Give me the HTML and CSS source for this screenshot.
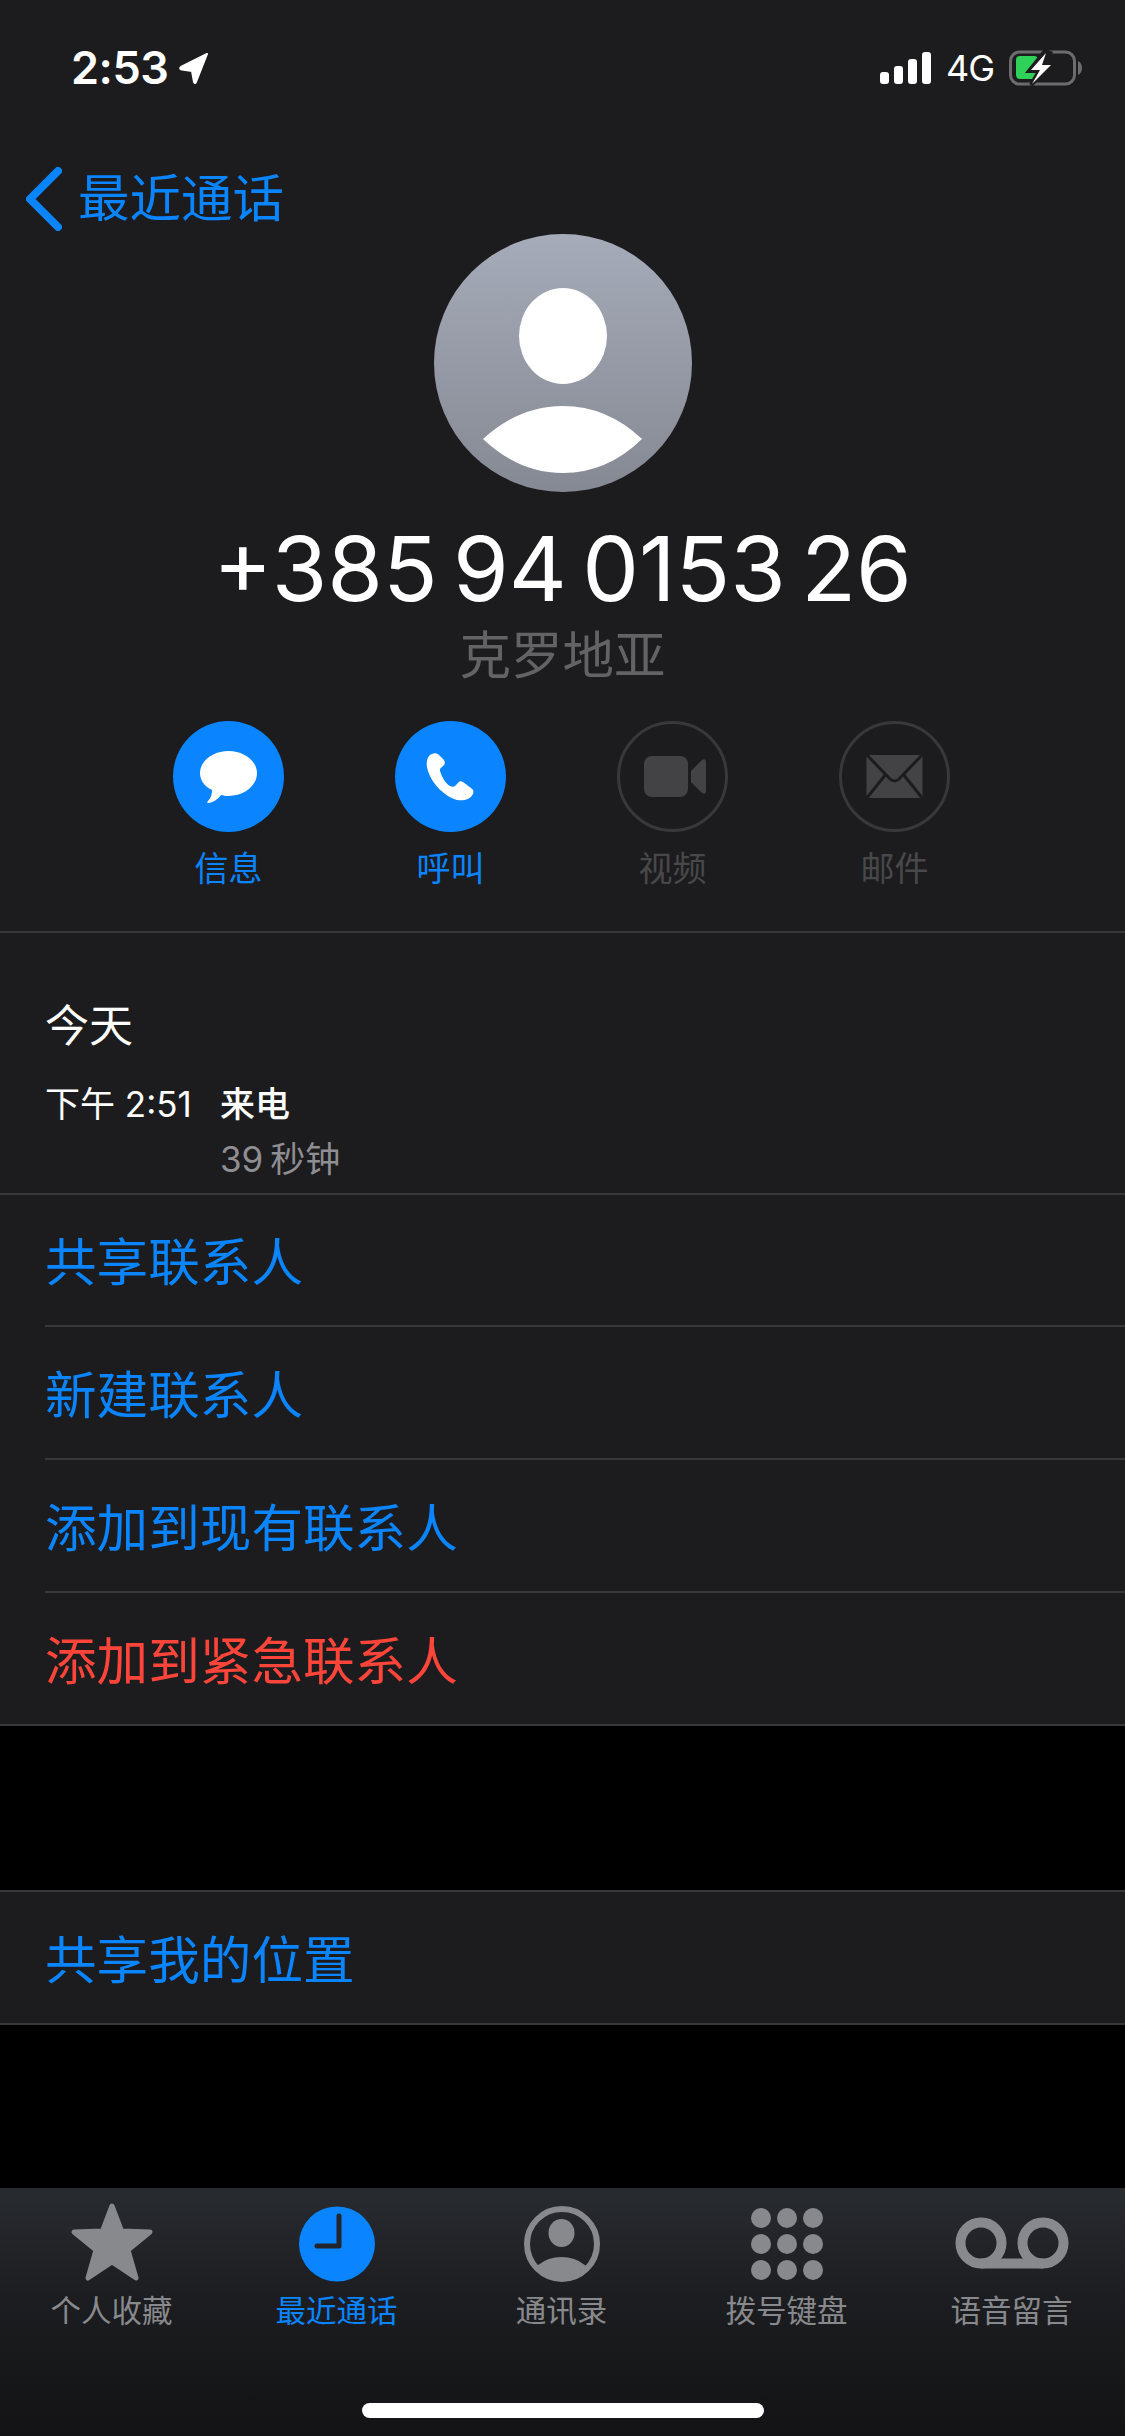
FILE: index.html
```html
<!DOCTYPE html>
<html lang="zh-CN">
<head>
    <meta charset="UTF-8">
    <title>最近通话</title>
    <link rel="stylesheet" href="styles.css">
</head>
<body>
    <div class="phone">
        <div class="status-bar">
            <div class="status-left">
                <span class="status-time">2:53</span>
                <svg class="status-arrow" width="30" height="32" viewBox="0 0 30 32"><path d="M28 2 L2 15 Q0 17 3 17.500 L13 19 L15 30 Q16 32 17 30 Z" fill="#fff" stroke="#fff" stroke-width="2" stroke-linejoin="round"/></svg>
            </div>
            <div class="status-right">
                <div class="signal">
                    <span class="signal-bar bar-1"></span>
                    <span class="signal-bar bar-2"></span>
                    <span class="signal-bar bar-3"></span>
                    <span class="signal-bar bar-4"></span>
                </div>
                <span class="status-net">4G</span>
                <svg class="battery" width="73" height="36" viewBox="0 0 73 36">
                    <rect x="1.500" y="2" width="64" height="32" rx="9" fill="none" stroke="#6c6c6e" stroke-width="3"/>
                    <path d="M69 11 Q73 13 73 18 Q73 23 69 25 Z" fill="#6c6c6e"/>
                    <rect x="7" y="6" width="22" height="23" rx="4" fill="#30d158"/>
                    <path d="M36 1 L20 21 L30 21 L22 35 L43 14 L33 14 L41 3 Z" fill="#1c1c1e" stroke="#1c1c1e" stroke-width="4"/>
                    <path d="M37 3 L22 20 L31 20 L23 34 L42 15 L33 15 Z" fill="#fff"/>
                </svg>
            </div>
        </div>

        <div class="nav-bar">
            <svg width="36" height="64" viewBox="0 0 36 64"><path d="M32 4 L4 32 L32 60" fill="none" stroke="#0a84ff" stroke-width="8" stroke-linecap="round" stroke-linejoin="round"/></svg>
            <span class="nav-back">最近通话</span>
        </div>

        <div class="contact-head">
            <svg class="avatar" width="258" height="258" viewBox="0 0 258 258">
                <defs>
                    <linearGradient id="avatar-bg" x1="0" y1="0" x2="0" y2="1">
                        <stop offset="0" stop-color="#a6abb9"/>
                        <stop offset="1" stop-color="#858993"/>
                    </linearGradient>
                </defs>
                <circle cx="129" cy="129" r="129" fill="url(#avatar-bg)"/>
                <ellipse cx="129" cy="102" rx="44" ry="48" fill="#fff"/>
                <path d="M49 205 Q85 172 129 172 Q173 172 208 205 Q173 239 129 239 Q85 239 49 205 Z" fill="#fff"/>
            </svg>
            <div class="contact-number">+385 94 0153 26</div>
            <div class="contact-region">克罗地亚</div>

            <div class="actions">
                <div class="action">
                    <div class="action-circle active">
                        <svg width="111" height="111" viewBox="0 0 111 111"><path d="M55.500 30 C71 30 84 40 84 52 C84 65 71 75 55.500 75 C53 75 50 74.500 48 74 C45 78 40 82 35 82 C34 82 34 81 35 80 C38 77 39 73 39 69 C31 65 27 59 27 52 C27 40 40 30 55.500 30 Z" fill="#fff"/></svg>
                    </div>
                    <span class="action-label">信息</span>
                </div>
                <div class="action">
                    <div class="action-circle active">
                        <svg width="111" height="111" viewBox="0 0 111 111"><path d="M37 33 C33 34 31 40 32 46 C34 58 46 74 62 79 C68 80 75 79 78 73 C79 70 78 68 76 67 L68 61 C66 60 64 60 63 62 L60 65 C59 66 57 66 55 65 C50 62 47 56 45 50 C45 48 45 47 47 46 L49 44 C50 43 50 41 49 39 L44 34 C42 32 39 32 37 33 Z" fill="#fff"/></svg>
                    </div>
                    <span class="action-label">呼叫</span>
                </div>
                <div class="action disabled">
                    <div class="action-circle">
                        <svg width="105" height="105" viewBox="3 3 105 105"><rect x="27" y="35" width="44" height="41" rx="8" fill="#434346"/><path d="M74 50 L85 39 Q89 37 89 41 L89 70 Q89 74 85 72 L74 61 Z" fill="#434346"/></svg>
                    </div>
                    <span class="action-label">视频</span>
                </div>
                <div class="action disabled">
                    <div class="action-circle">
                        <svg width="105" height="105" viewBox="3 3 105 105"><rect x="27.500" y="34" width="56" height="43" rx="3" fill="#434346"/><path d="M27 33 L51 58 Q55.500 62 60 58 L84 33 M27 78 L47 53 M84 78 L64 53" fill="none" stroke="#1c1c1e" stroke-width="3"/></svg>
                    </div>
                    <span class="action-label">邮件</span>
                </div>
            </div>
        </div>

        <div class="call-section">
            <div class="call-date">今天</div>
            <div class="call-row">
                <span class="call-time">下午 2:51</span>
                <div class="call-info">
                    <div class="call-type">来电</div>
                    <div class="call-duration">39 秒钟</div>
                </div>
            </div>
        </div>

        <div class="action-list">
            <div class="list-row"><span class="list-text">共享联系人</span></div>
            <div class="list-row"><span class="list-text">新建联系人</span></div>
            <div class="list-row"><span class="list-text">添加到现有联系人</span></div>
            <div class="list-row"><span class="list-text danger">添加到紧急联系人</span></div>
        </div>

        <div class="action-list second">
            <div class="list-row"><span class="list-text">共享我的位置</span></div>
        </div>

        <div class="tab-bar">
            <div class="tabs">
                <div class="tab">
                    <svg class="tab-icon" width="86" height="80" viewBox="0 0 86 80"><path d="M43 4 L52.500 29 L81 30 L59 48 L67 76 L43 60 L19 76 L27 48 L5 30 L33.500 29 Z" fill="#88898d" stroke="#88898d" stroke-width="5" stroke-linejoin="round"/></svg>
                    <span class="tab-label">个人收藏</span>
                </div>
                <div class="tab current">
                    <svg class="tab-icon" width="76" height="80" viewBox="0 0 76 80"><ellipse cx="38" cy="42" rx="38" ry="37.500" fill="#0a84ff"/><path d="M40 14 L40 44 L18 44" fill="none" stroke="#22262c" stroke-width="5" stroke-linecap="round" stroke-linejoin="round"/></svg>
                    <span class="tab-label">最近通话</span>
                </div>
                <div class="tab">
                    <svg class="tab-icon" width="76" height="80" viewBox="0 0 76 80">
                        <defs><clipPath id="contact-clip"><circle cx="38" cy="42" r="36"/></clipPath></defs>
                        <circle cx="38" cy="42" r="35" fill="none" stroke="#88898d" stroke-width="6"/>
                        <ellipse cx="37.500" cy="31" rx="13" ry="14" fill="#88898d"/>
                        <ellipse cx="37.500" cy="82" rx="33" ry="27" fill="#88898d" clip-path="url(#contact-clip)"/>
                    </svg>
                    <span class="tab-label">通讯录</span>
                </div>
                <div class="tab">
                    <div class="tab-icon keypad">
                        <span class="key-dot"></span><span class="key-dot"></span><span class="key-dot"></span>
                        <span class="key-dot"></span><span class="key-dot"></span><span class="key-dot"></span>
                        <span class="key-dot"></span><span class="key-dot"></span><span class="key-dot"></span>
                    </div>
                    <span class="tab-label">拨号键盘</span>
                </div>
                <div class="tab">
                    <svg class="tab-icon" width="114" height="80" viewBox="0 0 114 80"><circle cx="26" cy="41" r="20.500" fill="none" stroke="#88898d" stroke-width="10"/><circle cx="88" cy="41" r="20.500" fill="none" stroke="#88898d" stroke-width="10"/><path d="M26 61.500 L88 61.500" stroke="#88898d" stroke-width="10"/></svg>
                    <span class="tab-label">语音留言</span>
                </div>
            </div>
            <div class="home-indicator"></div>
        </div>
    </div>
</body>
</html>
```

FILE: styles.css
```css
:root {
    --bg-color: #1c1c1e;
    --blue: #0a84ff;
    --red: #ff453a;
    --line: #38383a;
    --tab-gray: #88898d;
}

* {
    box-sizing: border-box;
}

body {
    margin: 0;
    background-color: #000;
    font-family: Inter, 'Noto Sans CJK SC', sans-serif;
}

.phone {
    width: 1125px;
    height: 2436px;
    display: flex;
    flex-direction: column;
    background-color: #000;
    overflow: hidden;
}

/* status bar */
.status-bar {
    height: 167px;
    padding: 50px 43px 0 71px;
    display: flex;
    justify-content: space-between;
    align-items: flex-start;
    background-color: var(--bg-color);
    color: #fff;
}

.status-left {
    display: flex;
    align-items: center;
    gap: 11px;
}

.status-time {
    font-size: 45px;
    font-weight: 600;
    letter-spacing: -0.5px;
    line-height: 36px;
}

.status-right {
    display: flex;
    align-items: center;
    gap: 15px;
}

.signal {
    display: flex;
    align-items: flex-end;
    gap: 5px;
    height: 32px;
}

.signal-bar {
    width: 9px;
    background-color: #fff;
    border-radius: 3px;
}

.bar-1 { height: 12px; }
.bar-2 { height: 18px; }
.bar-3 { height: 25px; }
.bar-4 { height: 32px; }

.status-net {
    font-size: 36px;
    letter-spacing: -1px;
    line-height: 36px;
}

/* nav */
.nav-bar {
    height: 67px;
    padding-left: 26px;
    display: flex;
    align-items: flex-start;
    gap: 16px;
    background-color: var(--bg-color);
    color: var(--blue);
}

.nav-back {
    font-size: 51.500px;
    line-height: 62px;
}

/* avatar, number, buttons */
.contact-head {
    height: 699px;
    display: flex;
    flex-direction: column;
    align-items: center;
    background-color: var(--bg-color);
    border-bottom: 2px solid var(--line);
}

.contact-number {
    margin-top: 26px;
    font-size: 90px;
    letter-spacing: 0;
    word-spacing: -10px;
    line-height: 102px;
    color: #fff;
}

.contact-region {
    margin-top: 1px;
    font-size: 51.500px;
    line-height: 68px;
    color: #636366;
}

.actions {
    margin-top: 32px;
    margin-right: 2px;
    display: flex;
    gap: 111px;
}

.action {
    width: 111px;
    display: flex;
    flex-direction: column;
    align-items: center;
}

.action-circle {
    width: 111px;
    height: 111px;
    border-radius: 50%;
    border: 3px solid var(--line);
    display: flex;
    align-items: center;
    justify-content: center;
}

.action-circle.active {
    background-color: var(--blue);
    border: none;
}

.action-label {
    margin-top: 13px;
    font-size: 34px;
    line-height: 48px;
    color: var(--blue);
}

.action.disabled .action-label {
    color: #48484a;
}

/* call history */
.call-section {
    height: 260px;
    padding: 61px 45px 0;
    background-color: var(--bg-color);
}

.call-date {
    font-size: 44px;
    line-height: 64px;
    color: #fff;
}

.call-row {
    margin-top: 21px;
    display: flex;
}

.call-time {
    width: 175px;
    font-size: 35px;
    line-height: 50px;
    color: #fff;
}

.call-type {
    font-size: 35px;
    font-weight: 500;
    line-height: 50px;
    color: #fff;
}

.call-duration {
    margin-top: 5px;
    font-size: 35px;
    word-spacing: -3px;
    line-height: 50px;
    color: #8e8e93;
}

/* link rows */
.action-list {
    padding-left: 45px;
    background-color: var(--bg-color);
    border-top: 2px solid var(--line);
    border-bottom: 2px solid var(--line);
}

.action-list.second {
    margin-top: 164px;
}

.list-row {
    height: 133px;
    padding-top: 4px;
    display: flex;
    align-items: center;
    border-bottom: 2px solid var(--line);
}

.list-row:first-child {
    height: 132px;
}

.list-row:last-child {
    height: 131px;
    border-bottom: none;
}

.list-text {
    font-size: 51.600px;
    line-height: 70px;
    color: var(--blue);
}

.list-text.danger {
    color: var(--red);
}

/* tab bar */
.tab-bar {
    margin-top: auto;
    height: 248px;
    padding-top: 14px;
    display: flex;
    flex-direction: column;
    align-items: center;
    background: linear-gradient(180deg, #282b30 0%, #1c1d20 45%, #131315 100%);
}

.tabs {
    width: 1125px;
    margin-left: -2px;
    display: flex;
}

.tab {
    width: 225px;
    display: flex;
    flex-direction: column;
    align-items: center;
    color: var(--tab-gray);
}

.tab-icon {
    height: 80px;
}

.tab.current {
    color: var(--blue);
}

.tab-label {
    margin-top: 8px;
    font-size: 30.500px;
    line-height: 42px;
}

.keypad {
    width: 72px;
    padding-top: 6px;
    display: grid;
    grid-template-columns: repeat(3, 20px);
    grid-auto-rows: 20px;
    gap: 6px;
}

.key-dot {
    border-radius: 50%;
    background-color: var(--tab-gray);
}

.home-indicator {
    margin-top: 71px;
    width: 402px;
    height: 15px;
    border-radius: 8px;
    background-color: #fff;
}
```
